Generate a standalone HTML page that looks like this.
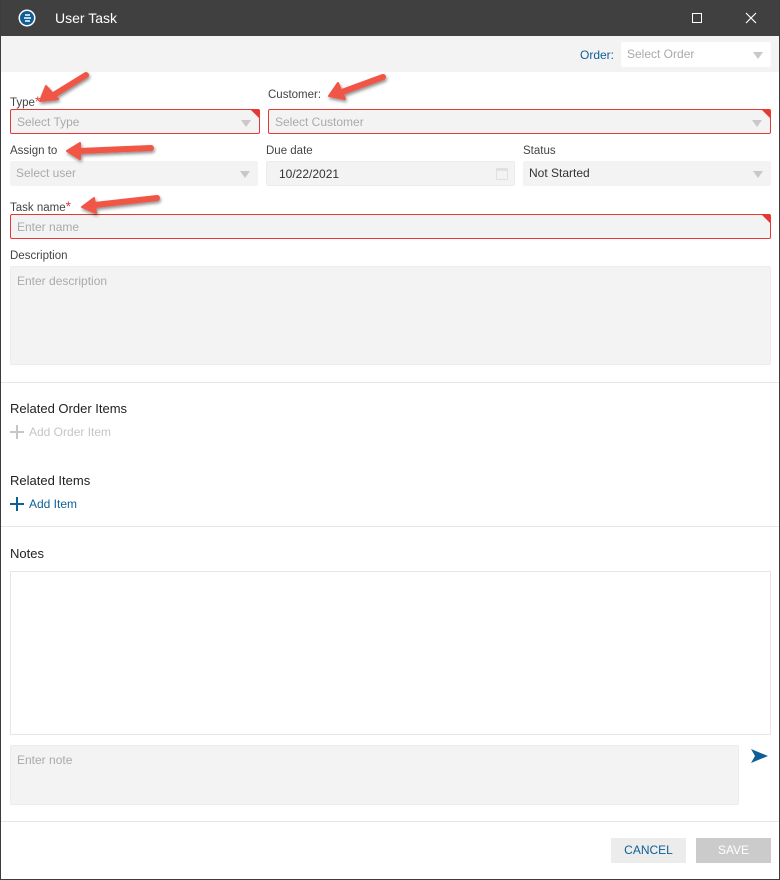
<!DOCTYPE html>
<html><head><style>
*{box-sizing:border-box;margin:0;padding:0}
body{width:780px;height:880px;font-family:"Liberation Sans",sans-serif;font-size:12px;color:#333;background:#fff;position:relative;overflow:hidden}
.abs{position:absolute}
.win{left:0;top:0;width:780px;height:880px;border:1px solid #3c3c3c;border-top:none}
.title{left:0;top:0;width:780px;height:36px;background:#404040;color:#fff;font-size:14px}
.tb{left:1px;top:36px;width:778px;height:36px;background:#f3f3f3}
.lbl{font-size:11.5px;color:#444}
.inp{background:#f3f3f3;border-radius:2px;color:#aaa;font-size:12px;padding-left:6px;line-height:24px;height:25px}
.err{border:1px solid #e53935}
.err:after{content:"";position:absolute;right:0;top:0;border-top:8px solid #e53935;border-left:8px solid transparent}
.dd:before{content:"";position:absolute;right:8px;top:10px;border-top:7px solid #c8c8c8;border-left:5px solid transparent;border-right:5px solid transparent}
.hr{height:1px;background:#e6e6e6;left:1px;width:778px}
h3{font-weight:normal;font-size:13px;color:#222}
</style></head><body>
<div class="abs title">
 <svg class="abs" style="left:18px;top:9px" width="18" height="18"><circle cx="9" cy="9" r="8.5" fill="#fff"/><circle cx="9" cy="9" r="7" fill="#0e5f96"/><path d="M7 6h5M6 9h7M7 12h5" stroke="#fff" stroke-width="1.4"/></svg>
 <span class="abs" style="left:55px;top:10px">User Task</span>
 <div class="abs" style="left:692px;top:13px;width:10px;height:10px;border:1px solid #fff"></div>
 <svg class="abs" style="left:745px;top:12px" width="12" height="12"><path d="M1 1L11 11M11 1L1 11" stroke="#fff" stroke-width="1.2"/></svg>
</div>
<div class="abs tb">
 <span class="abs" style="left:579px;top:12px;color:#0e5f96">Order:</span>
 <div class="abs inp dd" style="left:620px;top:6px;width:150px;background:#fff">Select Order</div>
</div>
<div class="abs win"></div>

<span class="abs lbl" style="left:10px;top:93px">Type<span style="color:#e53935;font-size:14px">*</span></span>
<span class="abs lbl" style="left:268px;top:89px">Customer:</span>
<div class="abs inp err dd" style="left:10px;top:109px;width:250px">Select Type</div>
<div class="abs inp err dd" style="left:268px;top:109px;width:503px">Select Customer</div>

<span class="abs lbl" style="left:10px;top:145px">Assign to</span>
<span class="abs lbl" style="left:266px;top:145px">Due date</span>
<span class="abs lbl" style="left:523px;top:145px">Status</span>
<div class="abs inp dd" style="left:10px;top:161px;width:248px">Select user</div>
<div class="abs inp" style="left:266px;top:161px;width:249px;color:#333;padding-left:12px;border:1px solid #ececec">10/22/2021
 <div class="abs" style="right:6px;top:6px;width:12px;height:12px;border:1px solid #e0e0e0;border-top:3px solid #e0e0e0"></div></div>
<div class="abs inp dd" style="left:523px;top:161px;width:248px;color:#333">Not Started</div>

<span class="abs lbl" style="left:10px;top:198px">Task name<span style="color:#e53935;font-size:14px">*</span></span>
<div class="abs inp err" style="left:10px;top:214px;width:761px">Enter name</div>

<span class="abs lbl" style="left:10px;top:250px">Description</span>
<div class="abs inp" style="left:10px;top:266px;width:761px;height:99px;padding-top:2px;border:1px solid #ececec">Enter description</div>

<div class="abs hr" style="top:382px"></div>
<h3 class="abs" style="left:10px;top:401px">Related Order Items</h3>
<svg class="abs" style="left:10px;top:425px" width="14" height="14"><path d="M7 0V14M0 7H14" stroke="#c6c6c6" stroke-width="2"/></svg>
<span class="abs" style="left:29px;top:425px;color:#c6c6c6">Add Order Item</span>
<h3 class="abs" style="left:10px;top:473px">Related Items</h3>
<svg class="abs" style="left:10px;top:497px" width="14" height="14"><path d="M7 0V14M0 7H14" stroke="#0e5f96" stroke-width="2"/></svg>
<span class="abs" style="left:29px;top:497px;color:#0e5f96">Add Item</span>
<div class="abs hr" style="top:526px"></div>
<h3 class="abs" style="left:10px;top:546px">Notes</h3>
<div class="abs" style="left:10px;top:571px;width:761px;height:164px;border:1px solid #e6e6e6"></div>
<div class="abs inp" style="left:10px;top:745px;width:729px;height:60px;padding-top:2px;border:1px solid #ececec">Enter note</div>
<svg class="abs" style="left:751px;top:749px" width="17" height="14"><path d="M0 0L17 7L0 14L4 7Z" fill="#0e5f96"/></svg>
<div class="abs hr" style="top:821px"></div>
<div class="abs" style="left:611px;top:838px;width:75px;height:25px;background:#ececec;color:#0e5f96;text-align:center;line-height:25px">CANCEL</div>
<div class="abs" style="left:696px;top:838px;width:75px;height:25px;background:#cbcbcb;color:#fff;text-align:center;line-height:25px">SAVE</div>

<svg class="abs" style="left:0;top:0" width="780" height="240">
<defs><filter id="s"><feDropShadow dx="1" dy="2" stdDeviation="1.5" flood-color="#000" flood-opacity=".45"/></filter></defs>
<g stroke="#f05545" stroke-width="6" stroke-linecap="round" fill="#f05545" filter="url(#s)">
<line x1="86" y1="75" x2="52" y2="96"/><path d="M40 101L46 86L58 99Z" stroke-width="2" stroke-linejoin="round"/>
<line x1="383" y1="77" x2="342" y2="92"/><path d="M329 96L338 83L345 99Z" stroke-width="2" stroke-linejoin="round"/>
<line x1="151" y1="148" x2="80" y2="151"/><path d="M67 151L80 143L80 159Z" stroke-width="2" stroke-linejoin="round"/>
<line x1="157" y1="198" x2="95" y2="205"/><path d="M82 207L94 198L96 213Z" stroke-width="2" stroke-linejoin="round"/>
</g></svg>
</body></html>
